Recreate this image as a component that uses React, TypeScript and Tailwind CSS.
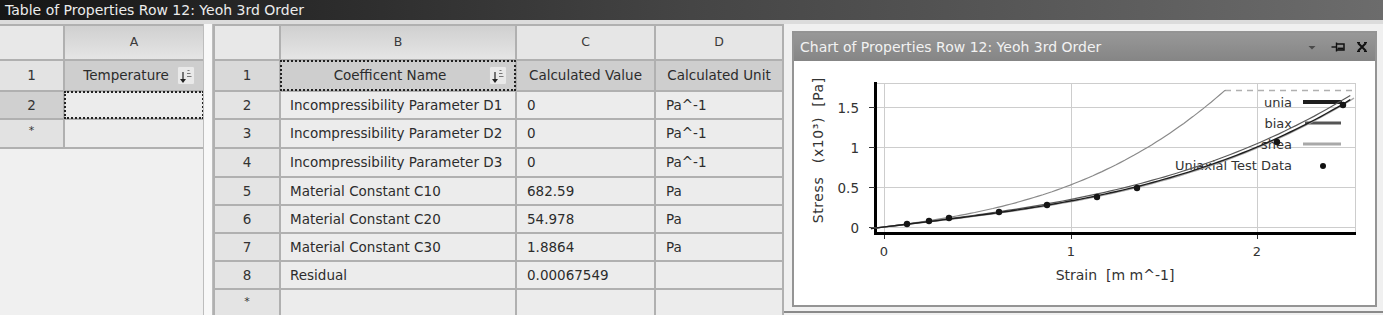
import React from "react";

const rightRows: [string, string, string, string][] = [
  ["2", "Incompressibility Parameter D1", "0", "Pa^-1"],
  ["3", "Incompressibility Parameter D2", "0", "Pa^-1"],
  ["4", "Incompressibility Parameter D3", "0", "Pa^-1"],
  ["5", "Material Constant C10", "682.59", "Pa"],
  ["6", "Material Constant C20", "54.978", "Pa"],
  ["7", "Material Constant C30", "1.8864", "Pa"],
  ["8", "Residual", "0.00067549", ""],
  ["*", "", "", ""],
];

function SortIcon() {
  return (
    <span className="flex h-[19px] w-[18px] shrink-0 items-center justify-center rounded-[2px] border border-[#cfcfcf] bg-[#e9e9e9]">
      <svg width="14" height="16" viewBox="0 0 14 16">
        <path d="M4 4v8" stroke="#333" strokeWidth="1.3" />
        <path d="M1 11h6l-3 4z" fill="#222" />
        <path d="M8.5 2.5h2M8 5.5h3.5M8 8.5h4.5" stroke="#777" strokeWidth="1.2" />
      </svg>
    </span>
  );
}

// header cell with column letter
function LetterCell({ children, active }: { children?: React.ReactNode; active?: boolean }) {
  return (
    <div
      className={
        active
          ? "flex items-center justify-center bg-linear-to-b from-[#d0d0d0] to-[#e5e5e5] text-[12.5px] text-[#3a3a3a]"
          : "flex items-center justify-center bg-[#e6e6e6] text-[12.5px] text-[#3a3a3a]"
      }
    >
      {children}
    </div>
  );
}

function NumCell({ children, tone = "bg-[#e4e4e4]" }: { children: React.ReactNode; tone?: string }) {
  return <div className={`flex items-center justify-center ${tone} text-[#333]`}>{children}</div>;
}

function LeftTable() {
  return (
    <div className="w-[203px] shrink-0 bg-[#f0f0f0]">
      <div className="grid grid-cols-[63px_138px] grid-rows-[33px_29px_26px_27px] gap-[2px] bg-[#b0b0b0] pt-[2px] pb-[2px]">
        <div className="bg-[#e8e8e8]" />
        <LetterCell active>A</LetterCell>

        <NumCell tone="bg-[#e3e3e3]">1</NumCell>
        <div className="flex items-center bg-[#cecece] pl-[10px] pr-[8px]">
          <span className="flex-1 text-center">Temperature</span>
          <SortIcon />
        </div>

        <NumCell tone="bg-[#d0d0d0]">2</NumCell>
        <div className="bg-[#ececec] outline-2 outline-dotted outline-[#222] -outline-offset-1" />

        <NumCell tone="bg-[#e2e2e2]">
          <span className="text-[11px] -mt-[4px]">*</span>
        </NumCell>
        <div className="bg-[#ececec]" />
      </div>
    </div>
  );
}

function RightTable() {
  return (
    <div className="w-[571px] shrink-0 overflow-hidden">
      <div className="grid grid-cols-[64px_234px_137px_126px] grid-rows-[33px_29px_26px_27px_27px_26px_26px_26px_26px_30px] gap-[2px] bg-[#b0b0b0] p-[2px] pb-0">
        <div className="bg-[#e8e8e8]" />
        <LetterCell active>B</LetterCell>
        <LetterCell>C</LetterCell>
        <LetterCell>D</LetterCell>

        <NumCell tone="bg-[#d9d9d9]">1</NumCell>
        <div className="flex items-center bg-[#cecece] pl-[10px] pr-[8px] outline-2 outline-dotted outline-[#222] -outline-offset-1">
          <span className="flex-1 text-center">Coefficent Name</span>
          <SortIcon />
        </div>
        <div className="flex items-center justify-center bg-[#cecece]">Calculated Value</div>
        <div className="flex items-center justify-center bg-[#cecece]">Calculated Unit</div>

        {rightRows.map(([n, name, value, unit]) => (
          <React.Fragment key={n}>
            <NumCell>{n === "*" ? <span className="text-[11px] -mt-[6px]">*</span> : n}</NumCell>
            <div className="flex items-center whitespace-nowrap bg-[#ececec] pl-[9px]">{name}</div>
            <div className="flex items-center bg-[#ececec] pl-[10px]">{value}</div>
            <div className="flex items-center bg-[#ececec] pl-[10px]">{unit}</div>
          </React.Fragment>
        ))}
      </div>
    </div>
  );
}

// chart maths: page coordinates
const X0 = 884;
const XS = 186.5;
const Y0 = 227;
const YS = 80;
const px = (e: number) => X0 + XS * e;
const py = (s: number) => Y0 - YS * s;

function curve(f: (e: number) => number, from: number, to: number) {
  const pts: string[] = [];
  for (let i = 0; i <= 80; i++) {
    const e = from + ((to - from) * i) / 80;
    pts.push(`${px(e).toFixed(1)},${py(f(e)).toFixed(1)}`);
  }
  return "M" + pts.join("L");
}

const upper = (e: number) => 0.3 * e + 0.08 * e * e + 0.146 * e * e * e;
const unia = (e: number) => 0.28 * e - 0.02 * e * e + 0.065 * e * e * e;
const biax = (e: number) => 0.295 * e - 0.015 * e * e + 0.064 * e * e * e;
const shea = (e: number) => 0.27 * e - 0.02 * e * e + 0.066 * e * e * e;

const testData: [number, number][] = [
  [907, 224],
  [929, 221],
  [949, 218],
  [999, 212],
  [1047, 205],
  [1097, 197],
  [1137, 188],
  [1277, 142],
  [1343, 105],
];

function Chart() {
  const font = "'DejaVu Sans', sans-serif";
  return (
    <svg width="581" height="244" viewBox="794 61 581 244" className="block">
      <defs>
        <clipPath id="plot">
          <rect x="860" y="90" width="495" height="150" />
        </clipPath>
      </defs>
      {/* grid */}
      <g stroke="#cdcdcd" strokeWidth="1">
        <path d="M876 83.5H1355" />
        {[107, 147, 187, 227].map((y) => (
          <path key={y} d={`M876 ${y + 0.5}H1355`} />
        ))}
        {[884, 1071, 1257, 1355].map((x) => (
          <path key={x} d={`M${x + 0.5} 83V233`} />
        ))}
      </g>
      {/* axes */}
      <path d="M875.5 82V235" stroke="#000" strokeWidth="3" />
      <path d="M874 233.5H1356" stroke="#000" strokeWidth="3" />
      <g stroke="#333" strokeWidth="1">
        {[107, 147, 187, 227].map((y) => (
          <path key={y} d={`M869 ${y + 0.5}H875`} />
        ))}
        {[884, 1071, 1257].map((x) => (
          <path key={x} d={`M${x + 0.5} 235V239`} />
        ))}
      </g>
      <g fontFamily={font} fontSize="13.5" fill="#333" textAnchor="end" dominantBaseline="central">
        <text x="859" y="108">1.5</text>
        <text x="859" y="148">1</text>
        <text x="859" y="188">0.5</text>
        <text x="859" y="228">0</text>
      </g>
      <g fontFamily={font} fontSize="13" fill="#333" textAnchor="middle" dominantBaseline="central">
        <text x="884" y="251">0</text>
        <text x="1071" y="251">1</text>
        <text x="1257" y="251">2</text>
      </g>
      <text x="1115" y="275" fontFamily={font} fontSize="14" fill="#333" textAnchor="middle" dominantBaseline="central">
        Strain&#160;&#160;[m m^-1]
      </text>
      <g fontFamily={font} fontSize="14" fill="#333" textAnchor="middle" dominantBaseline="central" letterSpacing="0.6">
        <text transform="translate(818 200) rotate(-90)">Stress</text>
        <text transform="translate(818 140) rotate(-90)">(x10³)</text>
        <text transform="translate(818 92) rotate(-90)">[Pa]</text>
      </g>

      {/* legend */}
      <g fontFamily={font} fontSize="13" fill="#333" textAnchor="end" dominantBaseline="central">
        <text x="1292" y="102">unia</text>
        <text x="1292" y="123">biax</text>
        <text x="1292" y="144">shea</text>
        <text x="1292" y="165">Uniaxial Test Data</text>
      </g>
      <path d="M1303 102H1342" stroke="#1e1e1e" strokeWidth="4" />
      <path d="M1305 123H1341" stroke="#555" strokeWidth="3" />
      <path d="M1303 144H1341" stroke="#a8a8a8" strokeWidth="3" />
      <circle cx="1323" cy="166" r="3" fill="#111" />

      {/* curves */}
      <path d="M1225 90.5H1355" stroke="#b0b0b0" strokeWidth="1.5" strokeDasharray="6 5" />
      <g clipPath="url(#plot)" fill="none">
        <path d={curve(upper, -0.05, 1.9)} stroke="#8a8a8a" strokeWidth="1.2" />
        <path d={curve(shea, -0.07, 2.52)} stroke="#aaaaaa" strokeWidth="1.4" />
        <path d={curve(biax, -0.07, 2.5)} stroke="#5a5a5a" strokeWidth="1.2" />
        <path d={curve(unia, -0.07, 2.5)} stroke="#1e1e1e" strokeWidth="1.4" />
      </g>
      {testData.map(([x, y]) => (
        <circle key={x} cx={x} cy={y} r="3.2" fill="#151515" />
      ))}
    </svg>
  );
}

function ChartPanel() {
  return (
    <div className="h-[289px] flex-1 border-b-2 border-[#8a8a8a] pt-[7px] pl-[8px] pr-[6px]">
      <div className="h-[276px] border-2 border-[#949494] bg-white">
        <div className="flex h-[28px] items-center justify-between bg-linear-to-b from-[#989898] to-[#858585] pl-[6px] pr-[6px] text-[14px] text-[#f2f2f2]">
          <span>Chart of Properties Row 12: Yeoh 3rd Order</span>
          <div className="flex items-center">
            <svg width="14" height="14" viewBox="0 0 14 14">
              <path d="M3.5 6h7L7 9.5z" fill="#4a4a4a" />
            </svg>
            <svg width="14" height="14" viewBox="0 0 14 14" className="ml-[12px]">
              <path d="M0.5 7H5" stroke="#111" strokeWidth="1.4" />
              <path d="M5.5 2.5V11.5" stroke="#111" strokeWidth="1.4" />
              <path d="M5.5 4H13V10H5.5" fill="none" stroke="#111" strokeWidth="1.5" />
              <path d="M6.5 8.5H12.5" stroke="#111" strokeWidth="1.8" />
            </svg>
            <svg width="14" height="14" viewBox="0 0 14 14" className="ml-[10px]">
              <path d="M3 3L11 11M11 3L3 11" stroke="#111" strokeWidth="2" />
              <path d="M2 2.5H5M9 2.5H12M2 11.5H5M9 11.5H12" stroke="#111" strokeWidth="1" />
            </svg>
          </div>
        </div>
        <Chart />
      </div>
    </div>
  );
}

export default function App() {
  return (
    <div className="h-[315px] w-[1383px] overflow-hidden bg-[#f0f0f0] font-['DejaVu_Sans',sans-serif] text-[13.5px] text-[#2c2c2c]">
      <div className="h-[20px] bg-linear-to-r from-[#161616] via-[#454545] to-[#6c6c6c] pl-[5px] text-[14px] leading-[20px] text-[#ececec]">
        Table of Properties Row 12: Yeoh 3rd Order
      </div>
      <div className="h-[4px] bg-[#dcdcdc]" />
      <div className="flex h-[291px]">
        <LeftTable />
        <div className="w-[10px] shrink-0 border-x border-[#bdbdbd] bg-[#f8f8f8]" />
        <RightTable />
        <ChartPanel />
      </div>
    </div>
  );
}
